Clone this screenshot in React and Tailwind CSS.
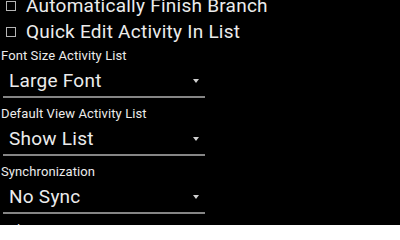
import { useState } from "react"

const checks = ["Automatically Finish Branch", "Quick Edit Activity In List"]

const spinners = [
  { label: "Font Size Activity List", value: "Large Font" },
  { label: "Default View Activity List", value: "Show List" },
  { label: "Synchronization", value: "No Sync" },
  { label: "Color", value: "Default" },
]

function CheckRow({ text }) {
  const [checked, setChecked] = useState(false)
  return (
    <div
      onClick={() => setChecked(!checked)}
      className="flex items-center h-[26px] pl-[6px] cursor-pointer"
    >
      <div className="w-[10px] h-[10px] border-[1.5px] border-[#b5b5b5] shrink-0" />
      <span className="ml-[10px] text-[19px] leading-[26px] tracking-[0.25px] whitespace-nowrap">{text}</span>
    </div>
  )
}

function Spinner({ label, value }) {
  return (
    <div className="mb-[8px]">
      <div className="text-[13px] leading-[16px] tracking-[0.1px] pl-[1px]">{label}</div>

      {/* dropdown */}
      <div className="mt-[4px] ml-[3px] w-[202px] pb-[2px] border-b-2 border-[#858585]">
        <div className="flex items-center justify-between h-[26px] pl-[6px] pr-[6px]">
          <span className="text-[19px] leading-[26px] tracking-[0.25px]">{value}</span>
          <div className="w-0 h-0 border-l-[3.5px] border-r-[3.5px] border-t-[4px] border-l-transparent border-r-transparent border-t-[#d0d0d0]" />
        </div>
      </div>
    </div>
  )
}

export default function App() {
  return (
    <div className="bg-black h-[225px] w-[400px] overflow-hidden text-[#ececec] font-['Roboto',sans-serif]">
      <div className="-mt-[7px]">
        {checks.map((c) => (
          <CheckRow key={c} text={c} />
        ))}

        <div className="mt-[3px]">
          {spinners.map((s) => (
            <Spinner key={s.label} label={s.label} value={s.value} />
          ))}
        </div>
      </div>
    </div>
  )
}
